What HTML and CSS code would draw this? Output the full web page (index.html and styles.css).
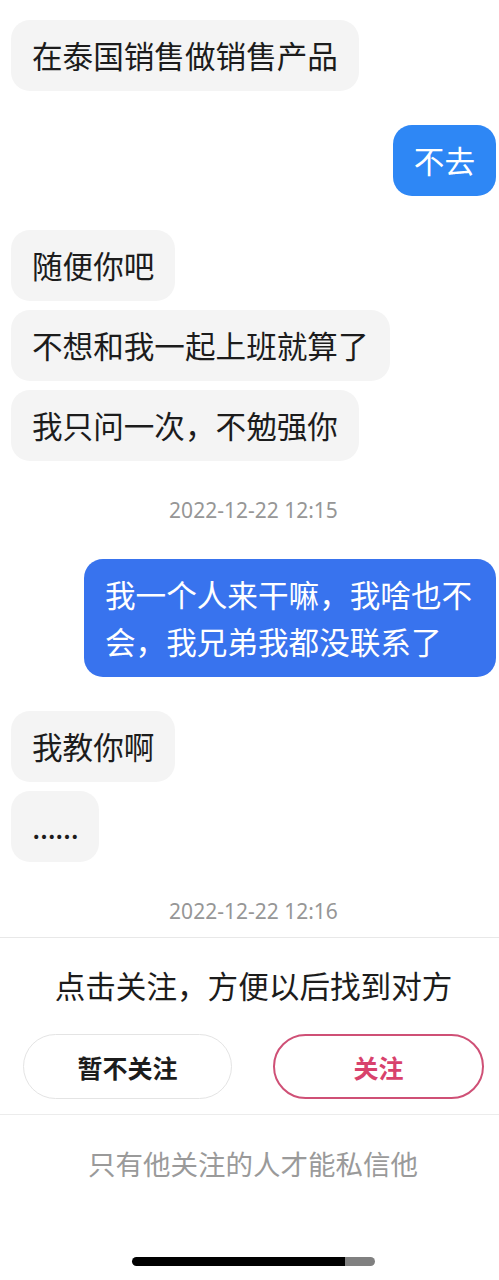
FILE: index.html
```html
<html lang="zh-CN">
<head>
    <meta charset="UTF-8">
    <meta name="viewport" content="width=device-width, initial-scale=1.0">
    <title>私信</title>
    <link rel="stylesheet" href="styles.css">
</head>
<body>
    <div class="screen">
        <div class="chat">
            <div class="msg in first"><div class="bubble">在泰国销售做销售产品</div></div>
            <div class="msg out first"><div class="bubble">不去</div></div>
            <div class="msg in first"><div class="bubble">随便你吧</div></div>
            <div class="msg in"><div class="bubble">不想和我一起上班就算了</div></div>
            <div class="msg in"><div class="bubble">我只问一次，不勉强你</div></div>

            <div class="time">2022-12-22 12:15</div>

            <div class="msg out dark"><div class="bubble">我一个人来干嘛，我啥也不会，我兄弟我都没联系了</div></div>
            <div class="msg in first"><div class="bubble">我教你啊</div></div>
            <div class="msg in"><div class="bubble dots">......</div></div>

            <div class="time">2022-12-22 12:16</div>
        </div>

        <div class="follow-panel">
            <p class="follow-tip">点击关注，方便以后找到对方</p>
            <div class="follow-actions">
                <button class="btn btn-skip">暂不关注</button>
                <button class="btn btn-follow">关注</button>
            </div>
        </div>

        <p class="dm-note">只有他关注的人才能私信他</p>

        <div class="home-bar"></div>
        <div class="watermark"></div>
    </div>
</body>
</html>
```

FILE: styles.css
```css
* {
    margin: 0;
    padding: 0;
    box-sizing: border-box;
}

html, body {
    background: #fff;
    overflow: hidden;
}

body {
    font-family: "Noto Sans CJK SC", "Noto Sans", sans-serif;
    color: #1c1c1c;
}

.screen {
    position: relative;
    width: 506px;
    height: 1280px;
}

/* chat messages */
.chat {
    display: flex;
    flex-direction: column;
    padding: 20px 10px 16px 11px;
}

.msg {
    display: flex;
    margin-top: 9px;
}

.msg.first {
    margin-top: 34px;
}

.chat .msg:first-child {
    margin-top: 0;
}

.msg.out {
    justify-content: flex-end;
}

.bubble {
    max-width: 412px;
    padding: 12px 21px;
    border-radius: 19px;
    background: #f4f4f4;
    font-size: 30.6px;
    line-height: 47px;
}

.bubble.dots {
    letter-spacing: -0.8px;
}

.msg.out .bubble {
    background: #2e87f5;
    color: #fff;
}

.msg.out.dark .bubble {
    background: #3873ee;
}

.time {
    margin: 39px 0;
    text-align: center;
    font-family: "Noto Sans", sans-serif;
    font-size: 21px;
    line-height: 20px;
    color: #969696;
}

.time:last-child {
    margin-bottom: 0;
}

.time + .msg {
    margin-top: 0;
}

/* follow prompt */
.follow-panel {
    border-top: 1px solid #e8e8e8;
    border-bottom: 1px solid #ececec;
    padding: 27px 22px 15px 23px;
}

.follow-tip {
    text-align: center;
    font-size: 30.6px;
    line-height: 40px;
}

.follow-actions {
    display: flex;
    gap: 41px;
    margin-top: 29px;
}

.btn {
    flex: 1;
    height: 65px;
    border-radius: 33px;
    background: #fff;
    font-family: "Noto Sans CJK SC", "Noto Sans", sans-serif;
    font-size: 25px;
    font-weight: 600;
}

.btn-skip {
    border: 1.5px solid #e4e4e4;
    color: #1c1c1c;
}

.btn-follow {
    border: 2px solid #cf5076;
    color: #d8426c;
}

.dm-note {
    margin-top: 28px;
    text-align: center;
    font-size: 27.5px;
    line-height: 40px;
    color: #9a9a9a;
}

.home-bar {
    width: 243px;
    height: 9px;
    margin: 74px auto 0;
    border-radius: 5px;
    background: #000;
}

.watermark {
    position: absolute;
    left: 345px;
    top: 1232px;
    width: 150px;
    height: 46px;
    background: rgba(255, 255, 255, 0.5);
}
```
